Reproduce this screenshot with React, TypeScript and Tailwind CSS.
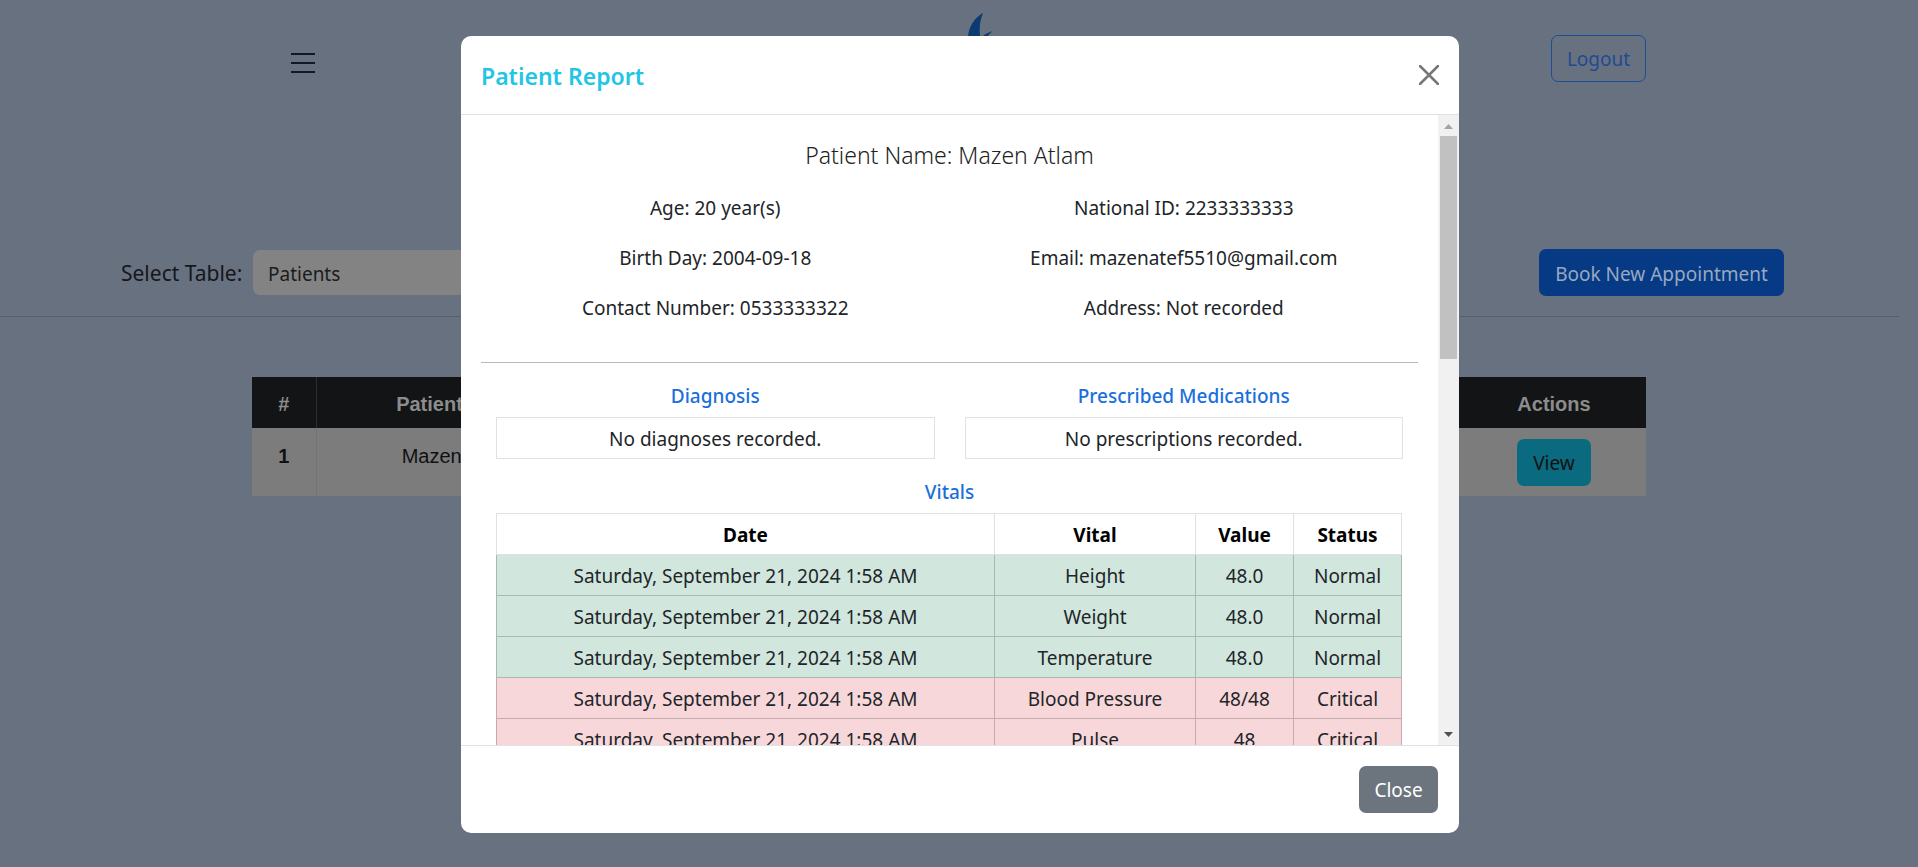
import React from "react";

const vitals = [
  { vital: "Height", value: "48.0", status: "Normal" },
  { vital: "Weight", value: "48.0", status: "Normal" },
  { vital: "Temperature", value: "48.0", status: "Normal" },
  { vital: "Blood Pressure", value: "48/48", status: "Critical" },
  { vital: "Pulse", value: "48", status: "Critical" },
];

const info = [
  ["Age: 20 year(s)", "National ID: 2233333333"],
  ["Birth Day: 2004-09-18", "Email: mazenatef5510@gmail.com"],
  ["Contact Number: 0533333322", "Address: Not recorded"],
];

const App = () => {
  return (
    <div className="relative h-[867px] w-[1918px] overflow-hidden bg-[#687180] font-['Noto_Sans','Open_Sans',sans-serif] text-[19px] text-[#212529]">
      {/* page behind the backdrop */}
      <header className="flex h-[249px] items-start pl-[291px] pr-[272px]">
        <div className="mt-[53px] flex w-[24px] flex-col gap-[7px]">
          <span className="h-[2px] bg-[#111a24]"></span>
          <span className="h-[2px] bg-[#111a24]"></span>
          <span className="h-[2px] bg-[#111a24]"></span>
        </div>
        <svg className="ml-[645px] mt-[10px] h-[26px] w-[40px]" viewBox="0 0 40 26">
          <path d="M23 3C14 8 9 17 8 26L20 26C19 18 20 10 23 3Z" fill="#0c3a72" />
          <path d="M33 21C29 22 25 24 23 26L28 26C29 24 31 22 33 21Z" fill="#0c3a72" />
        </svg>
        <button className="ml-auto mt-[35px] h-[47px] w-[95px] rounded-[7px] border border-[#1d4c99] pt-[2px] text-[#1f4b90]">
          Logout
        </button>
      </header>

      <section className="mr-[19px] flex h-[68px] border-b border-[#565f6c]">
        <div className="ml-[121px] flex h-[47px] w-[1663px] items-center">
          <label className="w-[132px] pt-[2px] text-[21px] text-[#14171c]">Select Table:</label>
          <div className="flex h-[45px] w-[400px] items-center rounded-[7px] bg-[#838383] pl-[15px] pt-[3px] text-[#1a1c1f]">
            Patients
          </div>
          <button className="ml-auto h-[47px] w-[245px] rounded-[7px] bg-[#063a85] pt-[3px] text-[#98a8c0]">
            Book New Appointment
          </button>
        </div>
      </section>

      <section className="ml-[252px] mt-[60px] w-[1394px]">
        <table className="w-full table-fixed border-collapse text-center font-['Liberation_Sans',sans-serif] text-[20px]">
          <thead>
            <tr className="h-[51px] bg-[#121416] font-bold text-[#8c8c8c]">
              <th className="w-[64px] border-r border-[#2c2f32] pt-[2px]">#</th>
              <th className="w-[287px] border-r border-[#2c2f32] pt-[2px]">Patient Name</th>
              <th></th>
              <th className="w-[184px] pt-[2px]">Actions</th>
            </tr>
          </thead>
          <tbody>
            <tr className="h-[68px] bg-[#7c7c7c] text-[#111]">
              <td className="border-r border-[#747474] pb-[12px] font-bold">1</td>
              <td className="border-r border-[#747474] pb-[12px]">Mazen Atlam</td>
              <td></td>
              <td>
                <button className="h-[47px] w-[74px] rounded-[7px] bg-[#0a6a80] pt-[2px] font-['Noto_Sans',sans-serif] text-[19px] text-[#111]">
                  View
                </button>
              </td>
            </tr>
          </tbody>
        </table>
      </section>

      {/* modal */}
      <div className="absolute left-[461px] top-[36px] flex h-[797px] w-[998px] flex-col overflow-hidden rounded-[10px] bg-white">
        <div className="flex h-[79px] shrink-0 items-center justify-between border-b border-[#dee2e6] px-[20px]">
          <h5 className="pt-[2px] text-[23px] font-semibold text-[#22c5e6]">Patient Report</h5>
          <svg className="h-[20px] w-[20px]" viewBox="0 0 20 20" fill="none">
            <path d="M1 1L19 19M19 1L1 19" stroke="#777" strokeWidth="2.5" strokeLinecap="round" />
          </svg>
        </div>

        <div className="flex h-[630px] shrink-0">
          <div className="h-full w-[977px] overflow-hidden px-[20px] pt-[22px]">
            <p className="text-center text-[23px] font-light leading-[37px] text-[#222]">
              Patient Name: Mazen Atlam
            </p>
            <div className="mt-[19px] flex flex-col gap-[20px]">
              {info.map((row) => (
                <div key={row[0]} className="grid grid-cols-2 text-center leading-[30px]">
                  <span>{row[0]}</span>
                  <span>{row[1]}</span>
                </div>
              ))}
            </div>
            <div className="mt-[39px] h-px bg-[#b8b8b8]"></div>

            <div className="mx-[15px] mt-[18px] grid grid-cols-2 gap-x-[30px] text-center">
              <div>
                <div className="font-medium leading-[30px] text-[#1a6fdc]">Diagnosis</div>
                <div className="mt-[6px] h-[42px] border border-[#dee2e6] leading-[42px]">No diagnoses recorded.</div>
              </div>
              <div>
                <div className="font-medium leading-[30px] text-[#1a6fdc]">Prescribed Medications</div>
                <div className="mt-[6px] h-[42px] border border-[#dee2e6] leading-[42px]">No prescriptions recorded.</div>
              </div>
            </div>

            <div className="mt-[18px] text-center font-medium leading-[30px] text-[#1a6fdc]">Vitals</div>
            <table className="mx-[15px] mt-[6px] w-[906px] table-fixed border-collapse text-center">
              <thead>
                <tr className="h-[41px] font-bold text-black">
                  <th className="border border-[#dee2e6] pt-[2px]">Date</th>
                  <th className="w-[201px] border border-[#dee2e6] pt-[2px]">Vital</th>
                  <th className="w-[98px] border border-[#dee2e6] pt-[2px]">Value</th>
                  <th className="w-[108px] border border-[#dee2e6] pt-[2px]">Status</th>
                </tr>
              </thead>
              <tbody>
                {vitals.map((v) => {
                  const cell = v.status === "Normal" ? "border border-[#a8b9b1] pt-[2px]" : "border border-[#c6acae] pt-[2px]";
                  return (
                    <tr key={v.vital} className={v.status === "Normal" ? "h-[41px] bg-[#d1e7dd]" : "h-[41px] bg-[#f8d7da]"}>
                      <td className={cell}>Saturday, September 21, 2024 1:58 AM</td>
                      <td className={cell}>{v.vital}</td>
                      <td className={cell}>{v.value}</td>
                      <td className={cell}>{v.status}</td>
                    </tr>
                  );
                })}
              </tbody>
            </table>
          </div>

          {/* scrollbar */}
          <div className="flex w-[21px] flex-col items-center bg-[#f1f1f1] pb-[8px] pt-[9px]">
            <svg className="h-[5px] w-[9px]" viewBox="0 0 9 5"><path d="M4.5 0L9 5H0Z" fill="#a3a3a3" /></svg>
            <div className="mt-[7px] h-[223px] w-[17px] bg-[#c1c1c1]"></div>
            <svg className="mt-auto h-[5px] w-[9px]" viewBox="0 0 9 5"><path d="M0 0H9L4.5 5Z" fill="#505050" /></svg>
          </div>
        </div>

        <div className="flex flex-1 items-start justify-end border-t border-[#dee2e6] pr-[21px] pt-[20px]">
          <button className="h-[47px] w-[79px] rounded-[7px] bg-[#6c757d] pt-[2px] text-white">Close</button>
        </div>
      </div>
    </div>
  );
};

export default App;
